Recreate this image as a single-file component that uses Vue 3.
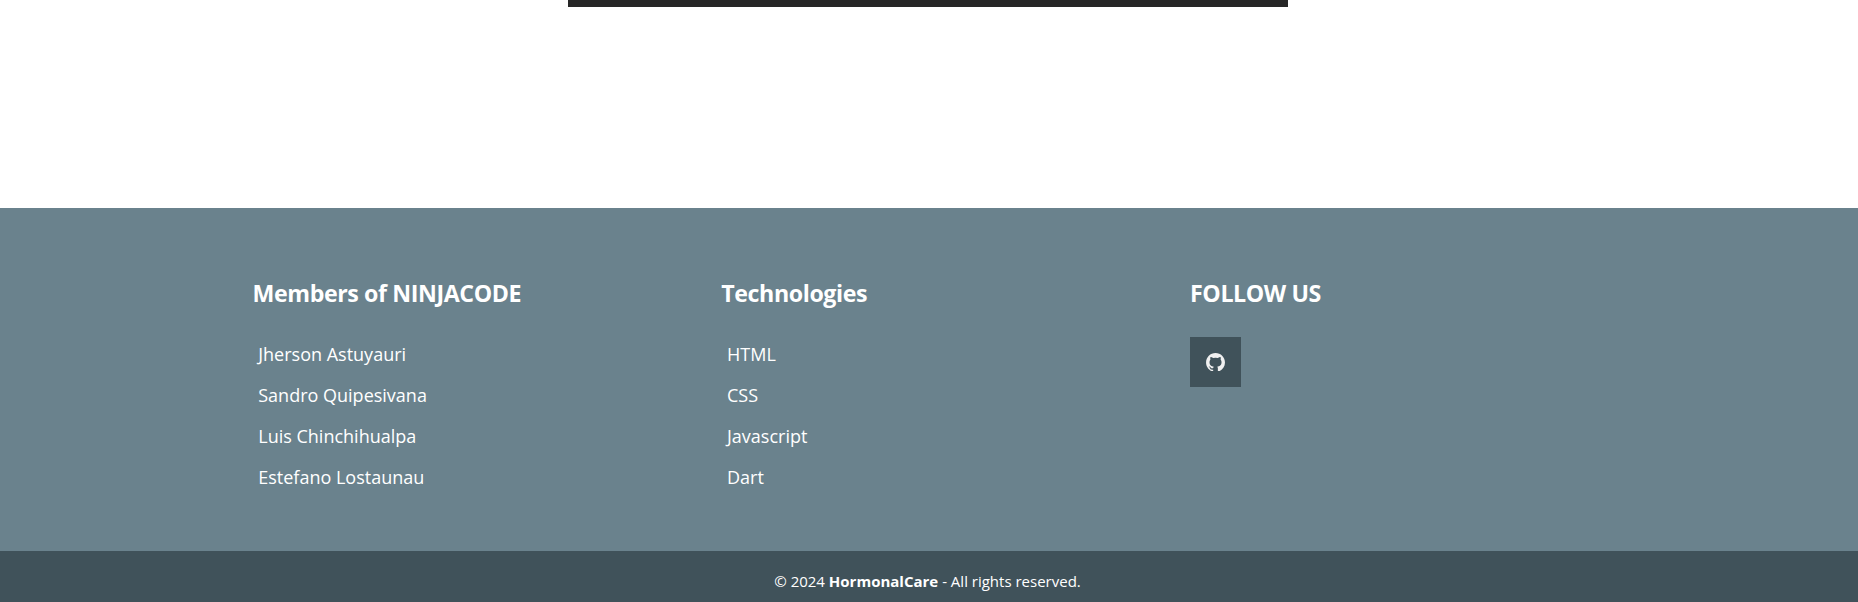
<script setup>
const columns = [
  { title: 'Members of NINJACODE', items: ['Jherson Astuyauri', 'Sandro Quipesivana', 'Luis Chinchihualpa', 'Estefano Lostaunau'] },
  { title: 'Technologies', items: ['HTML', 'CSS', 'Javascript', 'Dart'] },
]
</script>

<template>
  <div class="page">
    <main class="content"><div class="media"></div></main>
    <footer class="footer">
      <section v-for="col in columns" :key="col.title" class="column">
        <h2>{{ col.title }}</h2>
        <ul>
          <li v-for="item in col.items" :key="item">{{ item }}</li>
        </ul>
      </section>
      <section class="column">
        <h2>FOLLOW US</h2>
        <a class="social" aria-label="GitHub">
          <svg viewBox="2 2 20 19.5" width="19" height="18.5">
            <path d="M12.026 2c-5.509 0-9.974 4.465-9.974 9.974 0 4.406 2.857 8.145 6.821 9.465.499.09.679-.217.679-.481 0-.237-.008-.865-.011-1.396-2.475.302-3.161-1.338-3.161-1.338-.452-1.152-1.107-1.459-1.107-1.459-.705-.519.069-.505.069-.505 1.002.07 1.527.928 1.527.928.89 1.224 2.136.884 2.702.629.091-.645.351-1.085.635-1.334-2.214-.251-4.542-1.107-4.542-4.93 0-1.087.389-1.979 1.024-2.675-.101-.253-.446-1.268.099-2.64 0 0 .837-.269 2.742 1.021a9.582 9.582 0 0 1 2.496-.336 9.554 9.554 0 0 1 2.496.336c1.906-1.291 2.742-1.021 2.742-1.021.545 1.372.203 2.387.099 2.64.64.696 1.024 1.587 1.024 2.675 0 3.833-2.33 4.675-4.552 4.922.355.308.675.916.675 1.846 0 1.334-.012 2.41-.012 2.737 0 .267.178.577.687.479C19.146 20.115 22 16.379 22 11.974 22 6.465 17.535 2 12.026 2z" />
          </svg>
        </a>
      </section>
    </footer>
    <div class="copyright"><p>© 2024 <strong>HormonalCare</strong> - All rights reserved.</p></div>
  </div>
</template>

<style>
body { margin: 0; overflow: hidden; }
</style>

<style scoped>
.page {
  display: flex;
  flex-direction: column;
  height: 602px;
  font-family: "Open Sans", "Noto Sans", sans-serif;
  color: #fff;
  background: #fff;
}
.content { height: 208px; }
.media { width: 720px; height: 7px; margin-left: 568px; background: #272727; }
.footer {
  box-sizing: border-box;
  height: 343px;
  padding: 67px 0 0 252.5px;
  display: grid;
  grid-template-columns: repeat(3, 468.75px);
  background: #6a828d;
}
h2 {
  margin: 0;
  font-size: 23.2px;
  line-height: 36px;
  font-weight: 700;
  letter-spacing: -0.4px;
}
ul { margin: 23px 0 0; padding: 0 0 0 5.75px; list-style: none; }
li { height: 41px; line-height: 41px; font-size: 18px; }
.social {
  box-sizing: border-box;
  display: flex;
  align-items: center;
  justify-content: center;
  width: 51px;
  height: 50px;
  margin-top: 26px;
  padding-right: 1px;
  background: #40525a;
}
.social svg { fill: #f0f0f0; }
.copyright { height: 51px; background: #40525a; }
p { margin: 0; padding: 19px 3px 0 0; text-align: center; font-size: 15px; line-height: 22px; }
</style>
